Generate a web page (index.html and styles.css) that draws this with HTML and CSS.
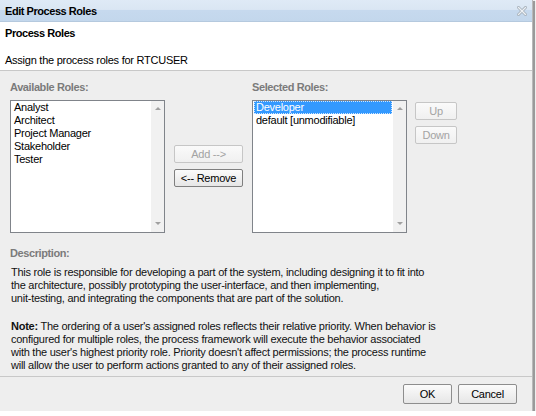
FILE: index.html
```html
<!DOCTYPE html>
<html>
<head>
<meta charset="utf-8">
<title>Edit Process Roles</title>
<link rel="stylesheet" href="styles.css">
</head>
<body>
<div class="dialog">
  <div class="titlebar">
    <span class="title">Edit Process Roles</span>
    <svg class="close" width="10" height="10" viewBox="0 0 10 10">
      <path d="M1.5 1.5 L8.5 8.5 M8.5 1.5 L1.5 8.5" stroke="#a9b3bd" stroke-width="3" stroke-linecap="square" fill="none"/>
      <path d="M1.5 1.5 L8.5 8.5 M8.5 1.5 L1.5 8.5" stroke="#eef2f6" stroke-width="1.2" stroke-linecap="square" fill="none"/>
    </svg>
  </div>
  <div class="header">
    <div class="h-title">Process Roles</div>
    <div class="h-sub">Assign the process roles for RTCUSER</div>
  </div>
  <div class="body">
    <div class="roles">
      <div class="col">
        <div class="label">Available Roles:</div>
        <div class="listbox">
          <ul class="items">
            <li>Analyst</li>
            <li>Architect</li>
            <li>Project Manager</li>
            <li>Stakeholder</li>
            <li>Tester</li>
          </ul>
          <div class="scroll"><span class="arr up"></span><span class="arr down"></span></div>
        </div>
      </div>
      <div class="mid">
        <button class="btn wide" disabled>Add --&gt;</button>
        <button class="btn wide">&lt;-- Remove</button>
      </div>
      <div class="col">
        <div class="label">Selected Roles:</div>
        <div class="listbox">
          <ul class="items">
            <li class="sel">Developer</li>
            <li>default [unmodifiable]</li>
          </ul>
          <div class="scroll"><span class="arr up"></span><span class="arr down"></span></div>
        </div>
      </div>
      <div class="updown">
        <button class="btn small" disabled>Up</button>
        <button class="btn small" disabled>Down</button>
      </div>
    </div>
    <div class="label desc-label">Description:</div>
    <p class="desc">This role is responsible for developing a part of the system, including designing it to fit into<br>the architecture, possibly prototyping the user-interface, and then implementing,<br>unit-testing, and integrating the components that are part of the solution.</p>
    <p class="note"><b>Note:</b> The ordering of a user's assigned roles reflects their relative priority. When behavior is<br>configured for multiple roles, the process framework will execute the behavior associated<br>with the user's highest priority role. Priority doesn't affect permissions; the process runtime<br>will allow the user to perform actions granted to any of their assigned roles.</p>
  </div>
  <div class="footer">
    <button class="btn ok">OK</button>
    <button class="btn cancel">Cancel</button>
  </div>
</div>
</body>
</html>
```

FILE: styles.css
```css
* { box-sizing: border-box; }
html, body { margin: 0; padding: 0; background: #ffffff; }
body {
  font-family: "Liberation Sans", Arial, sans-serif;
  font-size: 11px;
  line-height: 13px;
  color: #000;
  letter-spacing: -0.25px;
}
.dialog {
  width: 533px;
  height: 411px;
  display: flex;
  flex-direction: column;
  background: #eeeeee;
  border-right: 1px solid #b9b9b9;
  box-shadow: 2px 1px 1px #9a9a9a;
}
.titlebar {
  height: 22px;
  flex: none;
  display: flex;
  align-items: center;
  justify-content: space-between;
  padding: 0 5px 0 5px;
  background: linear-gradient(#dfeaf6 0, #dae6f3 45%, #c6d9ee 50%, #c3d7ec 100%);
  border-bottom: 1px solid #b5c9de;
}
.title { font-weight: bold; font-size: 11px; letter-spacing: -0.45px; color: #000; padding-top: 1px; }
.close { display: block; }
.header {
  flex: none;
  height: 49px;
  background: #fff;
  border-bottom: 1px solid #c8c8c8;
  padding: 5px 5px 0 5px;
}
.h-title { font-weight: bold; letter-spacing: -0.45px; }
.h-sub { margin-top: 14px; }
.body {
  flex: 1;
  padding: 10px 10px 0 10px;
}
.roles { display: flex; align-items: flex-start; }
.label { font-weight: bold; color: #7b7b7b; letter-spacing: -0.4px; }
.col { display: flex; flex-direction: column; gap: 6px; }
.listbox {
  width: 155px;
  height: 133px;
  background: #fff;
  border: 1px solid #80848a;
  display: flex;
}
.items { list-style: none; margin: 0; padding: 0 1px; flex: 1; }
.items li { height: 13px; padding-left: 2px; white-space: nowrap; }
.items li.sel {
  background: #3399ff;
  color: #fff;
  outline: 1px dotted #d0e6ff;
  outline-offset: -1px;
}
.scroll {
  width: 13px;
  flex: none;
  background: #f1f1f1;
  display: flex;
  flex-direction: column;
  justify-content: space-between;
  align-items: center;
  padding: 6px 0 7px;
}
.arr { width: 0; height: 0; border-left: 3px solid transparent; border-right: 3px solid transparent; }
.arr.up { border-bottom: 3px solid #a0a0a0; }
.arr.down { border-top: 3px solid #a0a0a0; }
.mid {
  margin: 0 9px 0 9px;
  padding-top: 64px;
  display: flex;
  flex-direction: column;
  gap: 6px;
}
.updown {
  margin-left: 8px;
  padding-top: 21px;
  display: flex;
  flex-direction: column;
  gap: 6px;
}
.btn {
  font-family: "Liberation Sans", Arial, sans-serif;
  font-size: 11px;
  letter-spacing: -0.25px;
  height: 18px;
  padding: 0;
  border: 1px solid #7f7f7f;
  border-radius: 2px;
  background: linear-gradient(#fbfbfb, #e6e6e6);
  color: #000;
}
.btn:disabled {
  border-color: #c6c6c6;
  color: #a3a3a3;
  background: linear-gradient(#fafafa, #f0f0f0);
}
.btn.wide { width: 69px; }
.btn.small { width: 42px; }
.desc-label { margin-top: 14px; }
.desc { margin: 6px 0 0 1px; color: #111; }
.note { margin: 15px 0 0 1px; color: #111; }
.footer {
  flex: none;
  height: 35px;
  border-top: 1px solid #c8c8c8;
  display: flex;
  justify-content: flex-end;
  align-items: center;
  gap: 6px;
  padding: 0 15px 0 0;
}
.btn.ok { width: 49px; height: 20px; border-color: #8d8d8d; }
.btn.cancel { width: 59px; height: 20px; border-color: #8d8d8d; }
```
